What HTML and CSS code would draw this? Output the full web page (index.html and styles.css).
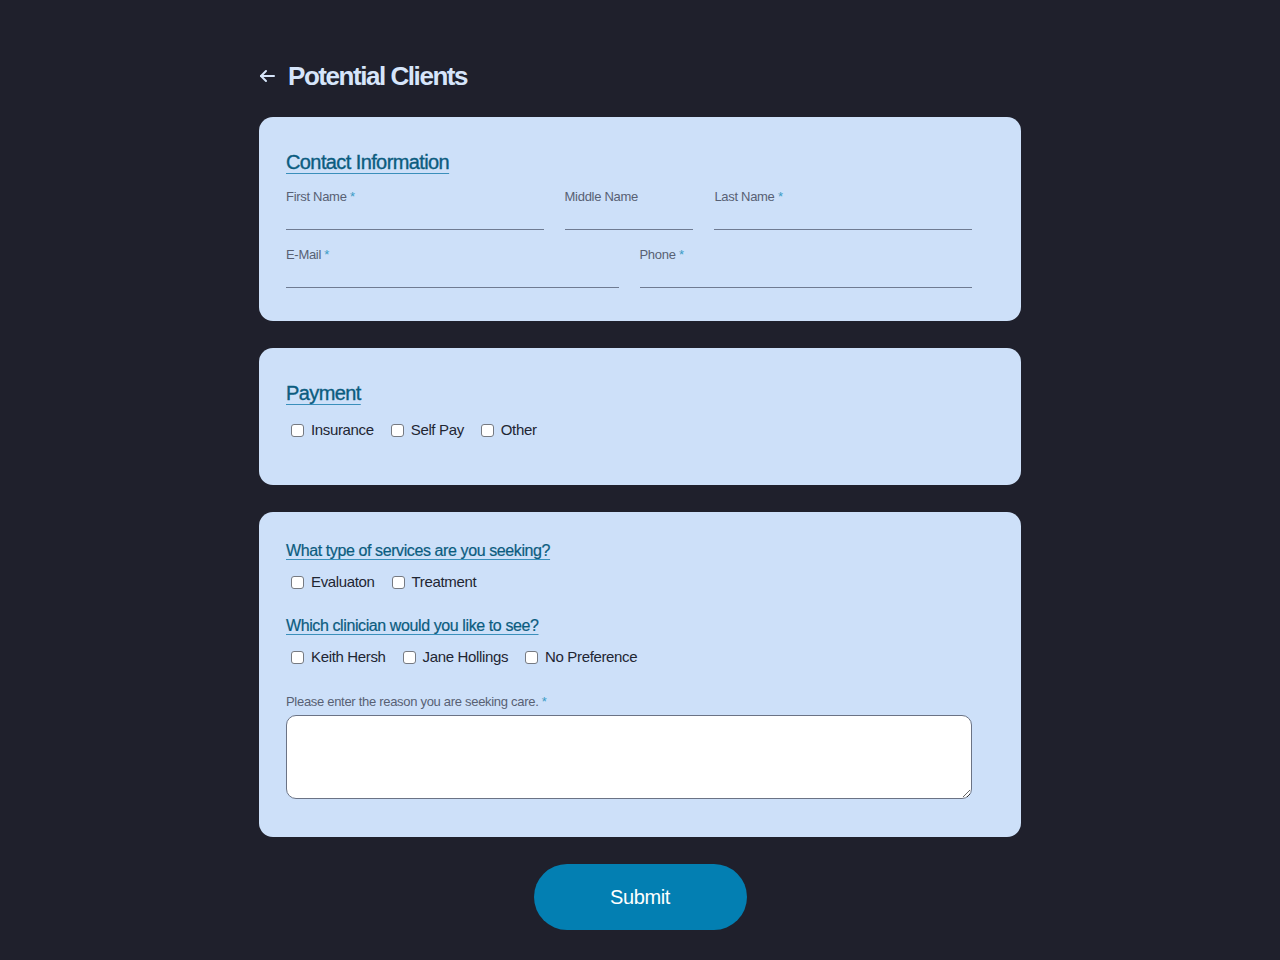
FILE: index.html
```html
<!DOCTYPE html>
<html lang="en">
<head>
<meta charset="utf-8">
<title>Potential Clients</title>
<link rel="stylesheet" href="styles.css">
</head>
<body>
<main class="page">
  <header class="page-header">
    <a class="back" href="#" aria-label="Back">
      <svg width="16" height="14" viewBox="0 0 16 14" fill="none" stroke="currentColor" stroke-width="2" stroke-linecap="round" stroke-linejoin="round"><path d="M15 7H2"/><path d="M7 2L2 7l5 5"/></svg>
    </a>
    <h1 class="title">Potential Clients</h1>
  </header>

  <form class="form">
    <section class="card">
      <h2 class="section-title">Contact Information</h2>
      <div class="row row-name">
        <label class="field"><span class="label">First Name <span class="req">*</span></span><input class="input" type="text"></label>
        <label class="field"><span class="label">Middle Name</span><input class="input" type="text"></label>
        <label class="field"><span class="label">Last Name <span class="req">*</span></span><input class="input" type="text"></label>
      </div>
      <div class="row row-contact">
        <label class="field"><span class="label">E-Mail <span class="req">*</span></span><input class="input" type="email"></label>
        <label class="field"><span class="label">Phone <span class="req">*</span></span><input class="input" type="tel"></label>
      </div>
    </section>

    <section class="card card-payment">
      <h2 class="section-title">Payment</h2>
      <div class="checks">
        <label class="check"><input type="checkbox"><span>Insurance</span></label>
        <label class="check"><input type="checkbox"><span>Self Pay</span></label>
        <label class="check"><input type="checkbox"><span>Other</span></label>
      </div>
    </section>

    <section class="card card-services">
      <h3 class="question">What type of services are you seeking?</h3>
      <div class="checks">
        <label class="check"><input type="checkbox"><span>Evaluaton</span></label>
        <label class="check"><input type="checkbox"><span>Treatment</span></label>
      </div>
      <h3 class="question q2">Which clinician would you like to see?</h3>
      <div class="checks">
        <label class="check"><input type="checkbox"><span>Keith Hersh</span></label>
        <label class="check"><input type="checkbox"><span>Jane Hollings</span></label>
        <label class="check"><input type="checkbox"><span>No Preference</span></label>
      </div>
      <label class="reason">
        <span class="label">Please enter the reason you are seeking care. <span class="req">*</span></span>
        <textarea class="textarea"></textarea>
      </label>
    </section>

    <div class="actions">
      <button type="button" class="submit">Submit</button>
    </div>
  </form>
</main>
</body>
</html>
```
FILE: styles.css
```css
* { box-sizing: border-box; }

html, body {
  margin: 0;
  padding: 0;
  background: #1f202c;
}

body {
  font-family: "Liberation Sans", Arial, sans-serif;
  color: #1f2633;
}

.page {
  width: 762px;
  margin: 0 auto;
  padding-top: 60px;
}

.page-header {
  display: flex;
  align-items: center;
  height: 32px;
  margin-bottom: 25px;
}

.back {
  display: flex;
  align-items: center;
  color: #d6e5fa;
  width: 29px;
}

.title {
  margin: 0;
  font-size: 26px;
  font-weight: 700;
  letter-spacing: -1.45px;
  color: #d6e5fa;
  line-height: 32px;
}

.form {
  display: flex;
  flex-direction: column;
  gap: 27px;
}

.card {
  background: #cde0f9;
  border-radius: 14px;
  padding: 33px 49px 33px 27px;
}

.section-title {
  margin: 0 0 15px;
  font-size: 20px;
  line-height: 24px;
  font-weight: 400;
  letter-spacing: -0.6px;
  color: #0b5c7f;
  text-decoration: underline;
  text-decoration-color: #3a8fbb;
  text-underline-offset: 4px;
  text-decoration-thickness: 1px;
  -webkit-text-stroke: 0.35px #0b5c7f;
  display: inline-block;
}

.row {
  display: grid;
  gap: 21px;
}

.row-name { grid-template-columns: minmax(0, 2fr) minmax(0, 1fr) minmax(0, 2fr); }
.row-contact { grid-template-columns: minmax(0, 1fr) minmax(0, 1fr); margin-top: 17px; }

.field {
  display: flex;
  flex-direction: column;
  min-width: 0;
}

.label {
  font-size: 13px;
  line-height: 16px;
  letter-spacing: -0.3px;
  color: #586074;
}

.req { color: #3a9cc6; }

.input {
  width: 100%;
  min-width: 0;
  height: 25px;
  border: none;
  border-bottom: 1.5px solid #6f7b92;
  background: transparent;
  outline: none;
  font: inherit;
  padding: 0;
}

.checks {
  display: flex;
  gap: 12px;
  height: 20px;
  align-items: center;
}

.check {
  display: flex;
  align-items: center;
  gap: 7px;
  font-size: 15px;
  letter-spacing: -0.35px;
  color: #1f2633;
  line-height: 20px;
}

.check input {
  appearance: none;
  -webkit-appearance: none;
  width: 13px;
  height: 13px;
  margin: 0 0 0 5px;
  border: 1px solid #767a82;
  border-radius: 3px;
  background: #fff;
}

.card-payment { padding-bottom: 45px; }

.card-services { padding-top: 29px; padding-bottom: 38px; }

.question {
  margin: 0 0 11px;
  font-size: 16px;
  line-height: 20px;
  font-weight: 400;
  letter-spacing: -0.4px;
  color: #0b5c7f;
  text-decoration: underline;
  text-decoration-color: #3a8fbb;
  text-underline-offset: 3px;
  -webkit-text-stroke: 0.2px #0b5c7f;
}

.q2 { margin-top: 24px; }

.reason {
  display: flex;
  flex-direction: column;
  margin-top: 27px;
  gap: 5px;
}

.textarea {
  height: 84px;
  border: 1px solid #6b7385;
  border-radius: 10px;
  background: #fff;
  resize: vertical;
  font: inherit;
}

.actions {
  display: flex;
  justify-content: center;
}

.submit {
  width: 213px;
  height: 66px;
  border: none;
  border-radius: 33px;
  background: #037fb2;
  color: #fff;
  font-family: "Liberation Sans", Arial, sans-serif;
  font-size: 20px;
  letter-spacing: -0.4px;
  cursor: pointer;
}
```
